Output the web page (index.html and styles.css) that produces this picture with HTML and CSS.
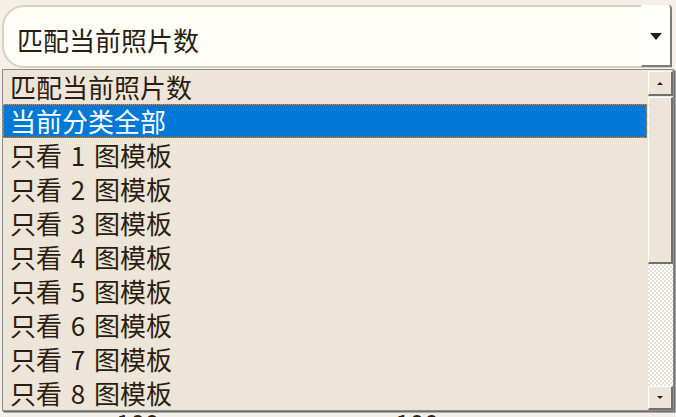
FILE: index.html
```html
<!DOCTYPE html>
<html lang="zh-CN">
<head>
<meta charset="utf-8">
<title>选择</title>
<link rel="stylesheet" href="styles.css">
</head>
<body>
<div class="select">
  <span class="value">匹配当前照片数</span>
  <span class="btn"><span class="tri-down"></span></span>
</div>
<div class="under"><span>100</span><span>100</span></div>
<div class="list">
  <ul class="items">
    <li class="item">匹配当前照片数</li>
    <li class="item selected">当前分类全部</li>
    <li class="item">只看 1 图模板</li>
    <li class="item">只看 2 图模板</li>
    <li class="item">只看 3 图模板</li>
    <li class="item">只看 4 图模板</li>
    <li class="item">只看 5 图模板</li>
    <li class="item">只看 6 图模板</li>
    <li class="item">只看 7 图模板</li>
    <li class="item">只看 8 图模板</li>
  </ul>
  <div class="scrollbar">
    <div class="sb-btn up"><span class="tri-up-s"></span></div>
    <div class="thumb"></div>
    <div class="track"></div>
    <div class="sb-btn down"><span class="tri-down-s"></span></div>
  </div>
</div>
</body>
</html>
```
FILE: styles.css
```css
html, body {
  margin: 0;
  padding: 0;
}
body {
  background: #f4f0e9;
  font-family: "Noto Sans CJK SC", "Noto Sans", sans-serif;
  color: #2a1e12;
  overflow: hidden;
  height: 417px;
  position: relative;
}
.select {
  display: flex;
  align-items: stretch;
  margin: 5px 4px 0 2px;
  height: 63px;
  box-sizing: border-box;
  border: 2px solid #dccfbc;
  border-right: none;
  border-radius: 22px 6px 0 22px;
  background: #fffdf8;
}
.value {
  flex: 1;
  display: flex;
  align-items: center;
  padding: 5px 0 0 13px;
  font-size: 26px;
  white-space: nowrap;
}
.btn {
  width: 31px;
  margin: -2px 0 -1px 0;
  box-sizing: border-box;
  border-left: 1px solid #ffffff;
  border-right: 2px solid #7b7b7b;
  border-bottom: 2px solid #7b7b7b;
  border-top-right-radius: 4px;
  background: #fffffb;
  display: flex;
  align-items: center;
  justify-content: center;
}
.tri-down {
  width: 0;
  height: 0;
  border-left: 6px solid transparent;
  border-right: 6px solid transparent;
  border-top: 7px solid #2a1e12;
  margin-top: 2px;
}
.under {
  display: flex;
  gap: 236px;
  margin-top: 338px;
  padding-left: 116px;
  font-size: 26px;
  line-height: 34px;
}
.list {
  position: absolute;
  left: 2px;
  top: 69px;
  width: 672px;
  height: 342px;
  box-sizing: border-box;
  border: 1px solid #8c8c8c;
  background: #ece5d8;
  display: flex;
  box-shadow: 1px 1px 0 #6f6f6f, 2px 2px 0 #a9a9a9;
}
.items {
  flex: 1;
  margin: 0;
  padding: 0;
  list-style: none;
}
.item {
  height: 34px;
  line-height: 34px;
  padding-left: 7px;
  font-size: 26px;
  word-spacing: 3px;
  white-space: nowrap;
  box-sizing: border-box;
}
.item.selected {
  background: #0078d7;
  color: #ffffff;
  border: 1px dotted #f78a2a;
  line-height: 32px;
  padding-left: 6px;
}
.scrollbar {
  width: 26px;
  box-sizing: border-box;
  padding: 1px 0 0 1px;
  display: flex;
  flex-direction: column;
}
.sb-btn, .thumb {
  box-sizing: border-box;
  background: #ece5d8;
  border-top: 1px solid #ffffff;
  border-left: 1px solid #ffffff;
  border-right: 2px solid #717171;
  border-bottom: 2px solid #717171;
}
.sb-btn {
  display: flex;
  align-items: center;
  justify-content: center;
}
.sb-btn.up {
  height: 25px;
}
.sb-btn.down {
  height: 24px;
}
.thumb {
  height: 167px;
  margin-top: 1px;
}
.track {
  flex: 1;
  background: repeating-conic-gradient(#ffffff 0 25%, #e9e1d3 0 50%) 0 0 / 4px 4px;
}
.tri-up-s {
  width: 0;
  height: 0;
  border-left: 3px solid transparent;
  border-right: 3px solid transparent;
  border-bottom: 3px solid #2a1e12;
}
.tri-down-s {
  width: 0;
  height: 0;
  border-left: 3px solid transparent;
  border-right: 3px solid transparent;
  border-top: 3px solid #2a1e12;
}
```
